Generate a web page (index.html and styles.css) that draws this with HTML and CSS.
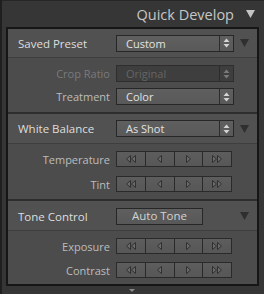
FILE: index.html
```html
<!DOCTYPE html>
<html lang="en">
<head>
  <meta charset="UTF-8">
  <title>Quick Develop</title>
  <link rel="stylesheet" href="styles.css">
</head>
<body>
  <div class="frame">
    <div class="header">
      <span class="title">Quick Develop</span>
      <svg class="collapse" width="9" height="8" viewBox="0 0 9 8"><polygon points="0,0 9,0 4.5,8" /></svg>
    </div>

    <div class="panel">
      <section class="group">
        <div class="group-head">
          <span class="head-label">Saved Preset</span>
          <div class="select">
            <span class="select-value">Custom</span>
            <span class="select-arrows"><svg width="7" height="10" viewBox="0 0 7 10"><polygon points="3.5,0.5 6.5,4 0.5,4" /><polygon points="0.5,6 6.5,6 3.5,9.5" /></svg></span>
          </div>
          <svg class="disclosure" width="9" height="8" viewBox="0 0 9 8"><polygon points="0,0 9,0 4.5,8" /></svg>
        </div>
        <div class="group-body first-body">
          <div class="row">
            <label class="row-label disabled">Crop Ratio</label>
            <div class="select is-disabled">
              <span class="select-value">Original</span>
              <span class="select-arrows"><svg width="7" height="10" viewBox="0 0 7 10"><polygon points="3.5,0.5 6.5,4 0.5,4" /><polygon points="0.5,6 6.5,6 3.5,9.5" /></svg></span>
            </div>
          </div>
          <div class="row">
            <label class="row-label">Treatment</label>
            <div class="select">
              <span class="select-value">Color</span>
              <span class="select-arrows"><svg width="7" height="10" viewBox="0 0 7 10"><polygon points="3.5,0.5 6.5,4 0.5,4" /><polygon points="0.5,6 6.5,6 3.5,9.5" /></svg></span>
            </div>
          </div>
        </div>
      </section>

      <section class="group">
        <div class="group-head tall">
          <span class="head-label">White Balance</span>
          <div class="select">
            <span class="select-value">As Shot</span>
            <span class="select-arrows"><svg width="7" height="10" viewBox="0 0 7 10"><polygon points="3.5,0.5 6.5,4 0.5,4" /><polygon points="0.5,6 6.5,6 3.5,9.5" /></svg></span>
          </div>
          <svg class="disclosure" width="9" height="8" viewBox="0 0 9 8"><polygon points="0,0 9,0 4.5,8" /></svg>
        </div>
        <div class="group-body stepper-body">
          <div class="row">
            <label class="row-label">Temperature</label>
            <div class="stepper">
              <span class="step"><svg width="10" height="8" viewBox="0 0 10 8"><polygon points="4.5,0.5 4.5,7.5 0.5,4" /><polygon points="9.5,0.5 9.5,7.5 5.5,4" /></svg></span>
              <span class="step"><svg width="5" height="8" viewBox="0 0 5 8"><polygon points="4.5,0.5 4.5,7.5 0.5,4" /></svg></span>
              <span class="step"><svg width="5" height="8" viewBox="0 0 5 8"><polygon points="0.5,0.5 0.5,7.5 4.5,4" /></svg></span>
              <span class="step"><svg width="10" height="8" viewBox="0 0 10 8"><polygon points="0.5,0.5 0.5,7.5 4.5,4" /><polygon points="5.5,0.5 5.5,7.5 9.5,4" /></svg></span>
            </div>
          </div>
          <div class="row">
            <label class="row-label">Tint</label>
            <div class="stepper">
              <span class="step"><svg width="10" height="8" viewBox="0 0 10 8"><polygon points="4.5,0.5 4.5,7.5 0.5,4" /><polygon points="9.5,0.5 9.5,7.5 5.5,4" /></svg></span>
              <span class="step"><svg width="5" height="8" viewBox="0 0 5 8"><polygon points="4.5,0.5 4.5,7.5 0.5,4" /></svg></span>
              <span class="step"><svg width="5" height="8" viewBox="0 0 5 8"><polygon points="0.5,0.5 0.5,7.5 4.5,4" /></svg></span>
              <span class="step"><svg width="10" height="8" viewBox="0 0 10 8"><polygon points="0.5,0.5 0.5,7.5 4.5,4" /><polygon points="5.5,0.5 5.5,7.5 9.5,4" /></svg></span>
            </div>
          </div>
        </div>
      </section>

      <section class="group">
        <div class="group-head taller">
          <span class="head-label">Tone Control</span>
          <button class="auto-btn">Auto Tone</button>
          <svg class="disclosure" width="9" height="8" viewBox="0 0 9 8"><polygon points="0,0 9,0 4.5,8" /></svg>
        </div>
        <div class="group-body last-body">
          <div class="row">
            <label class="row-label">Exposure</label>
            <div class="stepper">
              <span class="step"><svg width="10" height="8" viewBox="0 0 10 8"><polygon points="4.5,0.5 4.5,7.5 0.5,4" /><polygon points="9.5,0.5 9.5,7.5 5.5,4" /></svg></span>
              <span class="step"><svg width="5" height="8" viewBox="0 0 5 8"><polygon points="4.5,0.5 4.5,7.5 0.5,4" /></svg></span>
              <span class="step"><svg width="5" height="8" viewBox="0 0 5 8"><polygon points="0.5,0.5 0.5,7.5 4.5,4" /></svg></span>
              <span class="step"><svg width="10" height="8" viewBox="0 0 10 8"><polygon points="0.5,0.5 0.5,7.5 4.5,4" /><polygon points="5.5,0.5 5.5,7.5 9.5,4" /></svg></span>
            </div>
          </div>
          <div class="row">
            <label class="row-label">Contrast</label>
            <div class="stepper">
              <span class="step"><svg width="10" height="8" viewBox="0 0 10 8"><polygon points="4.5,0.5 4.5,7.5 0.5,4" /><polygon points="9.5,0.5 9.5,7.5 5.5,4" /></svg></span>
              <span class="step"><svg width="5" height="8" viewBox="0 0 5 8"><polygon points="4.5,0.5 4.5,7.5 0.5,4" /></svg></span>
              <span class="step"><svg width="5" height="8" viewBox="0 0 5 8"><polygon points="0.5,0.5 0.5,7.5 4.5,4" /></svg></span>
              <span class="step"><svg width="10" height="8" viewBox="0 0 10 8"><polygon points="0.5,0.5 0.5,7.5 4.5,4" /><polygon points="5.5,0.5 5.5,7.5 9.5,4" /></svg></span>
            </div>
          </div>
        </div>
      </section>
    </div>

    <div class="footer">
      <svg width="6" height="3" viewBox="0 0 6 3"><polygon points="0,0 6,0 3,3" /></svg>
    </div>
  </div>
</body>
</html>
```

FILE: styles.css
```css
html, body {
  margin: 0;
  padding: 0;
}

body {
  width: 264px;
  height: 294px;
  overflow: hidden;
  background-color: #363636;
  font-family: "Open Sans", "DejaVu Sans", sans-serif;
  font-size: 11px;
  color: #d6d6d6;
}

.frame {
  height: 294px;
  border-left: 2px solid #1f1f1f;
  box-sizing: border-box;
}

/* 标题栏 */
.header {
  height: 27px;
  display: flex;
  align-items: center;
  justify-content: flex-end;
  padding-right: 9px;
  border-top: 1px solid #262626;
  box-sizing: border-box;
}

.title {
  font-size: 14.5px;
  color: #c6c6c6;
  margin-right: 12px;
  padding-top: 1px;
}

.collapse polygon {
  fill: #c4c4c4;
}

/* 面板 */
.panel {
  margin-left: 4px;
  width: 253px;
  border: 2px solid #161616;
  box-sizing: border-box;
  background-color: #4c4c4c;
}

.group + .group {
  border-top: 2px solid #2e2e2e;
}

.group-head {
  display: grid;
  grid-template-columns: 108px 118px 1fr;
  align-items: center;
  height: 28px;
  background-color: #515151;
  border-bottom: 1px solid #3e3e3e;
}

.group-head.tall {
  height: 29px;
}

.group-head.taller {
  height: 30px;
  padding-top: 1px;
  box-sizing: border-box;
}

.head-label {
  padding-left: 10px;
  font-size: 11.5px;
  color: #dedede;
}

.disclosure {
  justify-self: end;
  margin-right: 8px;
}

.disclosure polygon {
  fill: #2f2f2f;
}

.group-body {
  display: flex;
  flex-direction: column;
  padding: 7px 0;
}

.first-body {
  gap: 6px;
}

.stepper-body {
  gap: 9px;
}

.last-body {
  gap: 8px;
  padding-bottom: 6px;
}

.row {
  display: grid;
  grid-template-columns: 108px auto;
  align-items: center;
}

.row-label {
  text-align: right;
  padding-right: 6px;
  color: #bcbcbc;
}

.row-label.disabled {
  color: #7a7a7a;
}

/* 下拉框 */
.select {
  display: flex;
  height: 17px;
  width: 118px;
  box-sizing: border-box;
  border: 1px solid #272727;
  background: linear-gradient(#5f5f5f, #595959);
  color: #e2e2e2;
}

.select-value {
  flex: 1;
  padding-left: 9px;
  line-height: 15px;
}

.select-arrows {
  width: 13px;
  border-left: 1px solid #2c2c2c;
  display: flex;
  align-items: center;
  justify-content: center;
}

.select-arrows polygon {
  fill: #d4d4d4;
}

.select.is-disabled {
  background: #3e3e3e;
  color: #656565;
  border-color: #2e2e2e;
}

.select.is-disabled .select-arrows polygon {
  fill: #7a7a7a;
}

/* 步进按钮 */
.stepper {
  display: flex;
  width: 116px;
  height: 16px;
  box-sizing: border-box;
  border: 1px solid #2a2a2a;
  background: linear-gradient(#5d5d5d, #575757);
}

.step {
  flex: 1;
  display: flex;
  align-items: center;
  justify-content: center;
}

.step + .step {
  border-left: 1px solid #2a2a2a;
}

.step polygon {
  fill: #6a6a6a;
  stroke: #303030;
  stroke-width: 1;
}

.auto-btn {
  width: 87px;
  height: 17px;
  padding: 0;
  font-family: inherit;
  font-size: 11.5px;
  color: #d2d2d2;
  border: 1px solid #272727;
  background: linear-gradient(#5f5f5f, #585858);
  line-height: 14px;
}

.footer {
  display: flex;
  justify-content: center;
  padding-top: 3px;
  padding-right: 3px;
}

.footer polygon {
  fill: #8a8a8a;
}
```
